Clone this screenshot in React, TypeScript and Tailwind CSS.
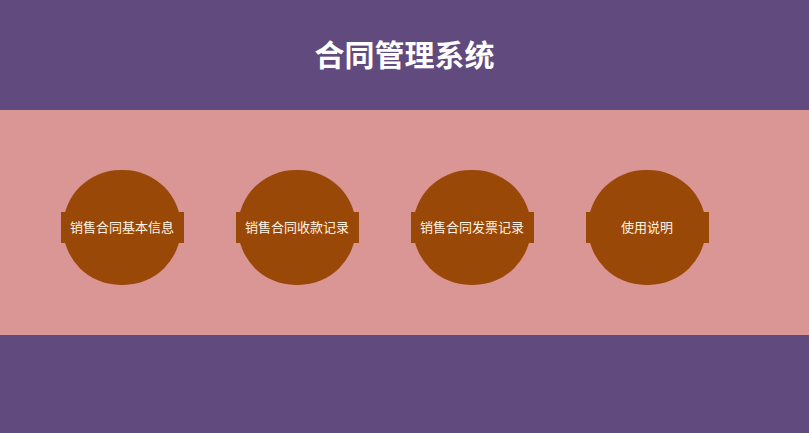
import React from 'react';

const links = ['销售合同基本信息', '销售合同收款记录', '销售合同发票记录', '使用说明'];

const App: React.FC = () => {
  return (
    <div
      className="flex flex-col min-h-screen bg-[#614a7d]"
      style={{ fontFamily: '"Liberation Sans", "Noto Sans CJK SC", sans-serif' }}
    >
      <header className="h-[110px] flex items-center justify-center pt-[2px]">
        <h1 className="text-[30px] font-bold text-white leading-none">合同管理系统</h1>
      </header>

      <main className="h-[225px] bg-[#da9695] flex items-start pl-[63px] pt-[60px] gap-[57px]">
        {links.map(label => (
          <div
            key={label}
            className="w-[118px] h-[115px] shrink-0 rounded-full bg-[#9a4807] flex items-center justify-center cursor-pointer"
          >
            <span className="w-[123px] h-[31px] shrink-0 bg-[#9a4807] flex items-center justify-center text-[13px] text-[#fff4e4]">
              {label}
            </span>
          </div>
        ))}
      </main>

      <footer className="flex-1" />
    </div>
  );
};

export default App;
